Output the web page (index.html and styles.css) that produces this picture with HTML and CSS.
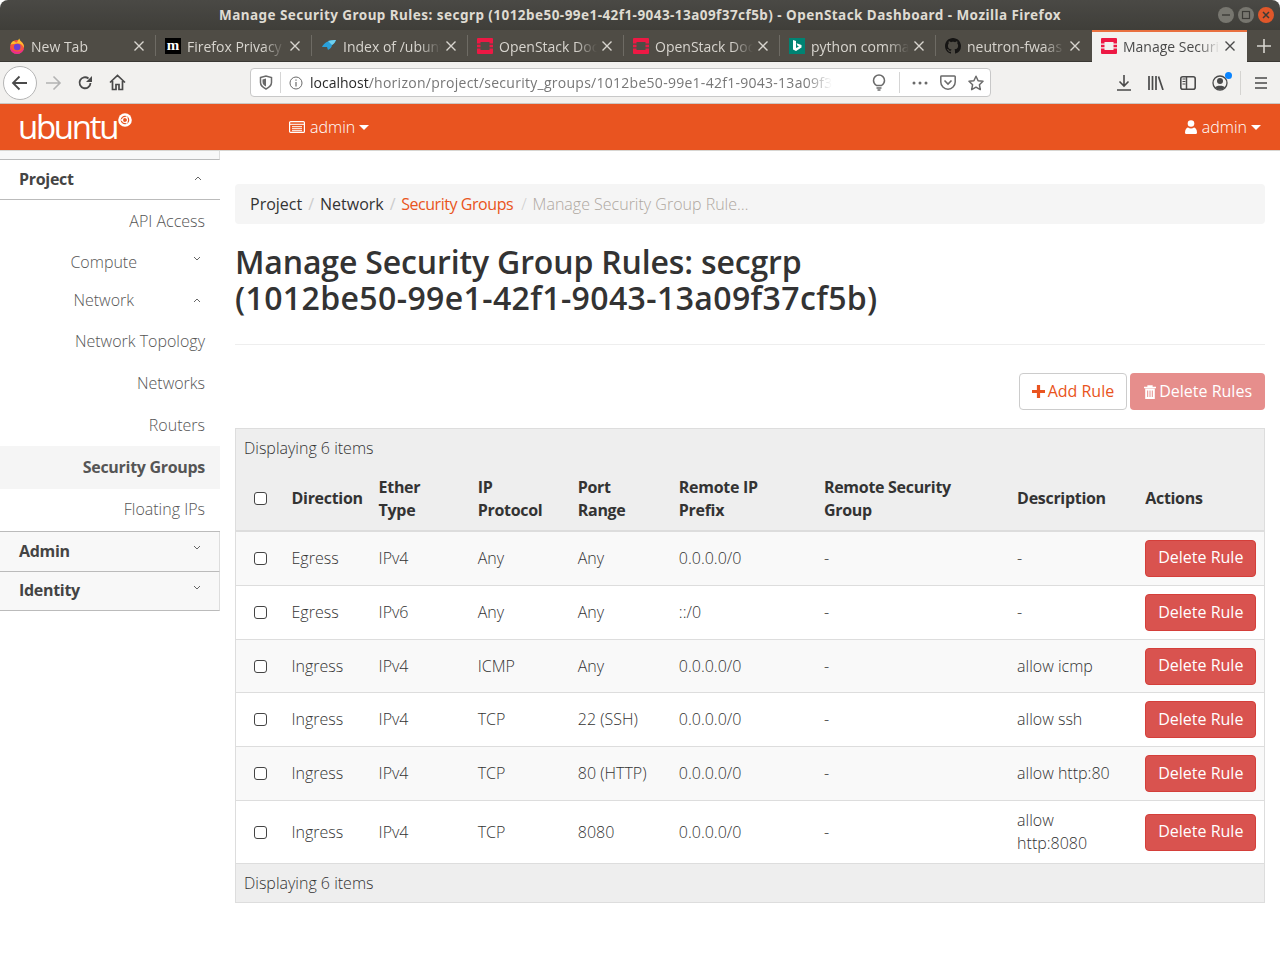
FILE: index.html
```html
<!DOCTYPE html>
<html lang="en">
<head>
    <meta charset="UTF-8">
    <title>Manage Security Group Rules: secgrp - OpenStack Dashboard</title>
    <link rel="stylesheet" href="styles.css">
</head>
<body>
    <svg class="svg-defs" width="0" height="0">
        <symbol id="openstack" viewBox="0 0 16 16">
            <path fill="#ed1944" d="M1 0h14a1 1 0 0 1 1 1v4.500h-3.500V4h-9v1.500H0V1a1 1 0 0 1 1-1zM0 6.700h3.500v2.600H0zM12.500 6.700H16v2.600h-3.500zM0 10.500h3.500V12h9v-1.500H16V15a1 1 0 0 1-1 1H1a1 1 0 0 1-1-1z"/>
        </symbol>
        <symbol id="tabx" viewBox="0 0 10 10">
            <path d="M.5.5l9 9M9.500.5l-9 9" fill="none" stroke="currentColor" stroke-width="1.400"/>
        </symbol>
    </svg>

    <div class="titlebar">
        <span class="window-title">Manage Security Group Rules: secgrp (1012be50-99e1-42f1-9043-13a09f37cf5b) - OpenStack Dashboard - Mozilla Firefox</span>
        <div class="window-buttons">
            <span class="win-btn"><svg width="10" height="10" viewBox="0 0 10 10"><path d="M1 5h8" stroke="#3c3b37" stroke-width="1.400"/></svg></span>
            <span class="win-btn"><svg width="10" height="10" viewBox="0 0 10 10"><rect x="1.500" y="1.500" width="7" height="7" fill="none" stroke="#3c3b37" stroke-width="1.200"/></svg></span>
            <span class="win-btn win-close"><svg width="10" height="10" viewBox="0 0 10 10"><path d="M2 2l6 6M8 2l-6 6" stroke="#3c3b37" stroke-width="1.500"/></svg></span>
        </div>
    </div>

    <div class="tabstrip">
        <div class="tab">
            <svg class="favicon" viewBox="0 0 16 16"><circle cx="8" cy="9" r="7" fill="#f8573c"/><path d="M1.500 6.500C2.500 4 4 3 5 3c1 1 2 1.500 3 1.500C8.500 3 9.500 1.500 10.500.5c0 1.500 1 2.500 2.500 4 1.500 1.500 2.200 3.500 2 5.500-1-2.500-3-4.500-6-4.500-3 0-5.500 1-7.500 1z" fill="#ffbd2e"/><path d="M1 9c0 4 3.200 7 7 7s7-3 7-6.500c-1 2.500-4 4.500-7 4.200-3 0-5.800-2-7-4.700z" fill="#ea2c8f"/><circle cx="8.200" cy="9" r="3.300" fill="#6d3fd6"/></svg>
            <span class="tab-text">New Tab</span><svg class="tab-x"><use href="#tabx"/></svg>
        </div>
        <div class="tab">
            <span class="favicon fav-m">m</span>
            <span class="tab-text">Firefox Privacy Notice</span><svg class="tab-x"><use href="#tabx"/></svg>
        </div>
        <div class="tab">
            <svg class="favicon" viewBox="0 0 16 16"><path d="M1 9c2-4 6-7 14-7-1 2-2 4-4 5 0 2-2 4-4 5l-1-3c-2 0-4 0-5 0z" fill="#2a9fd8"/><path d="M7 3c3-1 6-1 8-1-1 2-2 4-4 5z" fill="#6fd0ef"/></svg>
            <span class="tab-text">Index of /ubuntu</span><svg class="tab-x"><use href="#tabx"/></svg>
        </div>
        <div class="tab">
            <svg class="favicon" viewBox="0 0 16 16"><use href="#openstack"/></svg>
            <span class="tab-text">OpenStack Docs</span><svg class="tab-x"><use href="#tabx"/></svg>
        </div>
        <div class="tab">
            <svg class="favicon" viewBox="0 0 16 16"><use href="#openstack"/></svg>
            <span class="tab-text">OpenStack Docs</span><svg class="tab-x"><use href="#tabx"/></svg>
        </div>
        <div class="tab">
            <svg class="favicon" viewBox="0 0 16 16"><rect width="16" height="16" fill="#008373"/><path d="M4 2l3 1v7l3-1.500-1.500-.8-1-2.500 5 1.800v2.600L7 13l-3-1.500z" fill="#fff"/></svg>
            <span class="tab-text">python command</span><svg class="tab-x"><use href="#tabx"/></svg>
        </div>
        <div class="tab tab-last">
            <svg class="favicon" viewBox="0 0 16 16"><path fill="#161514" d="M8 0C3.580 0 0 3.580 0 8c0 3.540 2.290 6.530 5.470 7.590.4.070.55-.17.55-.38 0-.19-.01-.82-.01-1.490-2.010.37-2.530-.49-2.690-.94-.09-.23-.48-.94-.82-1.130-.28-.15-.68-.52-.01-.53.63-.01 1.080.58 1.230.82.72 1.210 1.870.87 2.330.66.070-.52.28-.87.51-1.070-1.780-.2-3.640-.89-3.640-3.950 0-.87.31-1.590.82-2.150-.08-.2-.36-1.020.08-2.120 0 0 .67-.21 2.200.82.64-.18 1.320-.27 2-.27s1.360.09 2 .27c1.530-1.040 2.200-.82 2.200-.82.44 1.100.16 1.920.08 2.120.51.56.82 1.270.82 2.150 0 3.070-1.870 3.750-3.650 3.950.29.25.54.73.54 1.480 0 1.070-.01 1.930-.01 2.200 0 .21.15.46.55.38A8 8 0 0 0 16 8c0-4.420-3.580-8-8-8z"/></svg>
            <span class="tab-text">neutron-fwaas</span><svg class="tab-x"><use href="#tabx"/></svg>
        </div>
        <div class="tab tab-active">
            <svg class="favicon" viewBox="0 0 16 16"><use href="#openstack"/></svg>
            <span class="tab-text">Manage Security</span><svg class="tab-x"><use href="#tabx"/></svg>
        </div>
        <svg class="new-tab" width="14" height="14" viewBox="0 0 14 14"><path d="M7 0v14M0 7h14" stroke="#d8d5cf" stroke-width="1.600"/></svg>
    </div>

    <div class="toolbar">
        <span class="back-btn">
            <svg width="18" height="18" viewBox="0 0 18 18"><path d="M16 9H2M8.500 2.500L2 9l6.500 6.500" fill="none" stroke="#4a4a4a" stroke-width="1.800"/></svg>
        </span>
        <svg class="tool-icon fwd" width="18" height="18" viewBox="0 0 18 18"><path d="M2 9h14M9.500 2.500L16 9l-6.500 6.500" fill="none" stroke="#b3b3b3" stroke-width="1.600"/></svg>
        <svg class="tool-icon reload" width="16" height="16" viewBox="0 0 16 16"><path d="M13.500 8A5.500 5.500 0 1 1 11.500 3.500" fill="none" stroke="#4a4a4a" stroke-width="1.800"/><path d="M15 1v6H9z" fill="#4a4a4a"/></svg>
        <svg class="tool-icon home" width="17" height="17" viewBox="0 0 17 17"><path d="M1 8.500L8.500 1.500 16 8.500M3.500 7v8.500h3.500v-5h3v5h3.500V7" fill="none" stroke="#4a4a4a" stroke-width="1.700"/></svg>

        <div class="urlbar">
            <svg class="url-shield" width="14" height="15" viewBox="0 0 14 15"><path d="M1.500 2.500L7 1l5.500 1.500v5c0 3-2.500 5-5.500 6.500-3-1.500-5.500-3.500-5.500-6.500z" fill="none" stroke="#6a6a6a" stroke-width="1.500"/><path d="M7 3.500v8c-2-1-3.500-2.500-3.500-4.500V4.500z" fill="#6a6a6a"/></svg>
            <span class="url-sep"></span>
            <svg class="url-info" width="14" height="14" viewBox="0 0 14 14"><circle cx="7" cy="7" r="6" fill="none" stroke="#6a6a6a" stroke-width="1"/><path d="M7 6v4.500M7 3.500v1.300" stroke="#6a6a6a" stroke-width="1.200"/></svg>
            <span class="url-text"><span class="url-host">localhost</span>/horizon/project/security_groups/1012be50-99e1-42f1-9043-13a09f37cf5b/</span>
            <svg class="url-bulb" width="14" height="17" viewBox="0 0 14 17"><path d="M4.500 11.500C3 10.500 1.500 9 1.500 6.500a5.500 5.500 0 0 1 11 0c0 2.500-1.500 4-3 5z" fill="none" stroke="#6a6a6a" stroke-width="1.500"/><path d="M4.500 14h5M5.500 16h3" stroke="#6a6a6a" stroke-width="1.300"/></svg>
            <span class="url-sep url-sep-right"></span>
            <svg class="url-dots" width="16" height="4" viewBox="0 0 16 4"><circle cx="2" cy="2" r="1.500" fill="#6a6a6a"/><circle cx="8" cy="2" r="1.500" fill="#6a6a6a"/><circle cx="14" cy="2" r="1.500" fill="#6a6a6a"/></svg>
            <svg class="url-pocket" width="16" height="15" viewBox="0 0 16 15"><path d="M1.500 1h13a.7.7 0 0 1 .7.700V7a7.200 7.200 0 0 1-14.400 0V1.700A.7.7 0 0 1 1.500 1z" fill="none" stroke="#6a6a6a" stroke-width="1.500"/><path d="M4.500 5.500L8 9l3.500-3.500" fill="none" stroke="#6a6a6a" stroke-width="1.600"/></svg>
            <svg class="url-star" width="16" height="16" viewBox="0 0 16 16"><path d="M8 1.200l2.100 4.500 4.900.6-3.600 3.400.9 4.900L8 12.200l-4.300 2.400.9-4.900L1 6.300l4.900-.6z" fill="none" stroke="#6a6a6a" stroke-width="1.500" stroke-linejoin="round"/></svg>
        </div>

        <div class="tool-right">
            <svg width="14" height="16" viewBox="0 0 14 16"><path d="M7 0v11M2.500 6.500L7 11l4.500-4.500M0 15h14" fill="none" stroke="#4a4a4a" stroke-width="1.600"/></svg>
            <svg class="tr-lib" width="16" height="14" viewBox="0 0 16 14"><path d="M1 0v14M4.500 0v14M8 0v14M10.500.5l4.500 13.500" fill="none" stroke="#4a4a4a" stroke-width="1.700"/></svg>
            <svg class="tr-side" width="16" height="14" viewBox="0 0 16 14"><rect x=".8" y=".8" width="14.400" height="12.400" rx="2" fill="none" stroke="#4a4a4a" stroke-width="1.600"/><path d="M6.500 1v12" stroke="#4a4a4a" stroke-width="1.500"/><path d="M2.500 3h3M2.500 5.500h3M2.500 8h3" stroke="#4a4a4a"/></svg>
            <span class="tr-account">
                <svg width="16" height="16" viewBox="0 0 16 16"><circle cx="8" cy="8" r="7" fill="none" stroke="#4a4a4a" stroke-width="1.300"/><circle cx="8" cy="6" r="3" fill="#4a4a4a"/><path d="M3 12.500c1-2.500 9-2.500 10 0-2 2.500-8 2.500-10 0z" fill="#4a4a4a"/></svg>
                <span class="account-dot"></span>
            </span>
            <span class="tr-sep"></span>
            <svg class="tr-menu" width="12" height="12" viewBox="0 0 12 12"><path d="M0 1h12M0 6h12M0 11h12" stroke="#4a4a4a" stroke-width="1.500"/></svg>
        </div>
    </div>

    <nav class="navbar">
        <a class="brand">ubuntu<svg class="brand-mark" width="14" height="14" viewBox="0 0 14 14"><circle cx="7" cy="7" r="6.800" fill="#fff"/><circle cx="7" cy="7" r="4.300" fill="#e95420"/><circle cx="7" cy="7" r="2.500" fill="none" stroke="#fff" stroke-width="1.100"/><circle cx="4" cy="7" r="1.100" fill="#fff"/><circle cx="8.500" cy="4.400" r="1.100" fill="#fff"/><circle cx="8.500" cy="9.600" r="1.100" fill="#fff"/></svg></a>
        <div class="project-menu">
            <svg width="16" height="12" viewBox="0 0 16 12"><rect x=".6" y=".6" width="14.800" height="10.800" rx="1" fill="none" stroke="#fff" stroke-width="1.200"/><path d="M1 3.300h14M3 5.700h10M3 7.700h10M3 9.700h10" stroke="#fff"/></svg>
            <span>admin</span><span class="caret"></span>
        </div>
        <div class="user-menu">
            <svg width="12" height="14" viewBox="0 0 12 14"><circle cx="6" cy="3.500" r="3.300" fill="#fff"/><path d="M0 12.500C0 9 2 7.500 3 7.500c1.800 1.200 4.200 1.200 6 0 1 0 3 1.500 3 5 0 1-.8 1.500-1.500 1.500h-9C.8 14 0 13.500 0 12.500z" fill="#fff"/></svg>
            <span>admin</span><span class="caret"></span>
        </div>
    </nav>

    <div class="page">
        <aside class="sidebar">
            <div class="side-top"></div>
            <div class="side-head side-open">Project<svg class="chev" width="8" height="5" viewBox="0 0 8 5"><path d="M1 4l3-3 3 3" fill="none" stroke="#666" stroke-width="1"/></svg></div>
            <ul class="side-list">
                <li class="side-item">API Access</li>
                <li class="side-group group-compute">Compute<svg class="chev" width="8" height="5" viewBox="0 0 8 5"><path d="M1 1l3 3 3-3" fill="none" stroke="#666" stroke-width="1"/></svg></li>
                <li class="side-group group-network">Network<svg class="chev" width="8" height="5" viewBox="0 0 8 5"><path d="M1 4l3-3 3 3" fill="none" stroke="#666" stroke-width="1"/></svg></li>
                <li class="side-item">Network Topology</li>
                <li class="side-item">Networks</li>
                <li class="side-item">Routers</li>
                <li class="side-item side-active">Security Groups</li>
                <li class="side-item side-last">Floating IPs</li>
            </ul>
            <div class="side-head side-closed side-admin">Admin<svg class="chev" width="8" height="5" viewBox="0 0 8 5"><path d="M1 1l3 3 3-3" fill="none" stroke="#666" stroke-width="1"/></svg></div>
            <div class="side-head side-closed">Identity<svg class="chev" width="8" height="5" viewBox="0 0 8 5"><path d="M1 1l3 3 3-3" fill="none" stroke="#666" stroke-width="1"/></svg></div>
        </aside>

        <main class="content">
            <ol class="breadcrumb">
                <li>Project</li>
                <li>Network</li>
                <li class="crumb-link">Security Groups</li>
                <li class="crumb-current">Manage Security Group Rule…</li>
            </ol>

            <h1 class="page-title">Manage Security Group Rules: secgrp <span class="title-id">(1012be50-99e1-42f1-9043-13a09f37cf5b)</span></h1>

            <div class="actions">
                <button class="btn btn-add"><svg width="13" height="13" viewBox="0 0 13 13"><path d="M6.500 0v13M0 6.500h13" stroke="#e95420" stroke-width="3.200"/></svg>Add Rule</button>
                <button class="btn btn-delete-all"><svg width="12" height="14" viewBox="0 0 12 14"><path d="M0 2.500h12M4 2.500V1h4v1.500" fill="none" stroke="#fff" stroke-width="1.300"/><path d="M1.200 3.500h9.600V14H1.200z" fill="#fff"/><path d="M3.700 5.500v6.500M6 5.500v6.500M8.300 5.500v6.500" stroke="#e68e8c" stroke-width="1"/></svg>Delete Rules</button>
            </div>

            <table class="rules">
                <colgroup>
                    <col class="col-check"><col class="col-dir"><col class="col-ether"><col class="col-proto"><col class="col-port"><col class="col-prefix"><col class="col-group"><col class="col-desc"><col class="col-act">
                </colgroup>
                <thead>
                    <tr class="meta-row"><td colspan="9">Displaying 6 items</td></tr>
                    <tr class="head-row">
                        <th class="cell-check"><input type="checkbox"></th>
                        <th>Direction</th>
                        <th>Ether<br>Type</th>
                        <th>IP<br>Protocol</th>
                        <th>Port<br>Range</th>
                        <th>Remote IP<br>Prefix</th>
                        <th>Remote Security<br>Group</th>
                        <th>Description</th>
                        <th>Actions</th>
                    </tr>
                </thead>
                <tbody>
                    <tr><td class="cell-check"><input type="checkbox"></td><td>Egress</td><td>IPv4</td><td>Any</td><td>Any</td><td>0.0.0.0/0</td><td>-</td><td>-</td><td><button class="btn btn-delete">Delete Rule</button></td></tr>
                    <tr><td class="cell-check"><input type="checkbox"></td><td>Egress</td><td>IPv6</td><td>Any</td><td>Any</td><td>::/0</td><td>-</td><td>-</td><td><button class="btn btn-delete">Delete Rule</button></td></tr>
                    <tr><td class="cell-check"><input type="checkbox"></td><td>Ingress</td><td>IPv4</td><td>ICMP</td><td>Any</td><td>0.0.0.0/0</td><td>-</td><td>allow icmp</td><td><button class="btn btn-delete">Delete Rule</button></td></tr>
                    <tr><td class="cell-check"><input type="checkbox"></td><td>Ingress</td><td>IPv4</td><td>TCP</td><td>22 (SSH)</td><td>0.0.0.0/0</td><td>-</td><td>allow ssh</td><td><button class="btn btn-delete">Delete Rule</button></td></tr>
                    <tr><td class="cell-check"><input type="checkbox"></td><td>Ingress</td><td>IPv4</td><td>TCP</td><td>80 (HTTP)</td><td>0.0.0.0/0</td><td>-</td><td>allow http:80</td><td><button class="btn btn-delete">Delete Rule</button></td></tr>
                    <tr><td class="cell-check"><input type="checkbox"></td><td>Ingress</td><td>IPv4</td><td>TCP</td><td>8080</td><td>0.0.0.0/0</td><td>-</td><td>allow<br>http:8080</td><td><button class="btn btn-delete">Delete Rule</button></td></tr>
                </tbody>
                <tfoot>
                    <tr class="meta-row"><td colspan="9">Displaying 6 items</td></tr>
                </tfoot>
            </table>
        </main>
    </div>
</body>
</html>
```

FILE: styles.css
```css
* {
    margin: 0;
    padding: 0;
    box-sizing: border-box;
}

body {
    width: 1280px;
    height: 977px;
    overflow: hidden;
    background: #fff;
    color: #333;
    font-family: 'Open Sans', 'Noto Sans', sans-serif;
    font-size: 15px;
    font-weight: 300;
}

.svg-defs {
    position: absolute;
}

/* window title */
.titlebar {
    height: 30px;
    display: flex;
    align-items: center;
    justify-content: center;
    position: relative;
    background: linear-gradient(#4a4945, #3f3e39);
    border-radius: 8px 8px 0 0;
}

.window-title {
    color: #dfdbd2;
    font-family: 'Noto Sans', sans-serif;
    font-size: 13.500px;
    font-weight: 700;
    letter-spacing: 0.450px;
    white-space: nowrap;
}

.window-buttons {
    position: absolute;
    top: 7px;
    right: 6px;
    display: flex;
    gap: 4px;
}

.win-btn {
    width: 16px;
    height: 16px;
    border-radius: 50%;
    background: #77766f;
    display: flex;
    align-items: center;
    justify-content: center;
}

.win-close {
    background: #e0572a;
}

/* tabs */
.tabstrip {
    height: 32px;
    display: flex;
    align-items: stretch;
    background: #4f4c45;
    border-bottom: 1px solid #3a3833;
}

.tab {
    width: 156px;
    display: flex;
    align-items: center;
    padding: 0 12px 0 9px;
    color: #d8d5cf;
    font-size: 14px;
    font-weight: 400;
    position: relative;
}

.tab::after {
    content: "";
    position: absolute;
    right: 0;
    top: 5px;
    bottom: 5px;
    width: 1px;
    background: #6e6b64;
}

.tab-last::after,
.tab-active::after {
    display: none;
}

.favicon {
    width: 16px;
    height: 16px;
    flex: none;
    margin-right: 6px;
}

.fav-m {
    background: #000;
    color: #fff;
    font-family: 'Liberation Serif', serif;
    font-size: 15px;
    font-weight: 700;
    line-height: 14px;
    text-align: center;
}

.tab-text {
    flex: 1;
    padding-top: 1px;
    overflow: hidden;
    white-space: nowrap;
    -webkit-mask-image: linear-gradient(to right, #000 78%, transparent 100%);
    mask-image: linear-gradient(to right, #000 78%, transparent 100%);
}

.tab-x {
    width: 10px;
    height: 10px;
    margin-left: 5px;
    flex: none;
}

.tab-active {
    width: 155px;
    background: #f2f1ef;
    color: #4a4a4a;
    box-shadow: inset 0 2px 0 #e9703f;
    margin-bottom: -1px;
}

.new-tab {
    margin: 9px 0 0 10px;
}

/* browser toolbar */
.toolbar {
    height: 42px;
    display: flex;
    align-items: center;
    background: #f2f1ef;
    border-bottom: 1px solid #c9c8c5;
    padding-left: 3px;
}

.back-btn {
    width: 34px;
    height: 34px;
    border: 1px solid #b5b5b5;
    border-radius: 50%;
    background: #fff;
    display: flex;
    align-items: center;
    justify-content: center;
    flex: none;
}

.fwd {
    margin-left: 7px;
}

.reload {
    margin-left: 15px;
}

.home {
    margin-left: 16px;
}

.urlbar {
    width: 741px;
    height: 29px;
    margin-left: 124px;
    display: flex;
    align-items: center;
    flex: none;
    background: #fff;
    border: 1px solid #c8c8c8;
    border-radius: 4px;
    padding-left: 8px;
}

.url-shield {
    flex: none;
}

.url-sep {
    width: 1px;
    height: 21px;
    margin-left: 7px;
    background: #d5d5d5;
    flex: none;
}

.url-info {
    margin-left: 8px;
    flex: none;
}

.url-text {
    width: 522px;
    margin-left: 7px;
    overflow: hidden;
    white-space: nowrap;
    color: #777;
    font-size: 14px;
    font-weight: 400;
    letter-spacing: 0.270px;
    flex: none;
    -webkit-mask-image: linear-gradient(to right, #000 95%, transparent 100%);
    mask-image: linear-gradient(to right, #000 95%, transparent 100%);
}

.url-host {
    color: #2a2a2a;
    letter-spacing: 0;
}

.url-bulb {
    margin-left: 40px;
    flex: none;
}

.url-sep-right {
    margin-left: 13px;
}

.url-dots {
    margin-left: 12px;
    flex: none;
}

.url-pocket {
    margin-left: 12px;
    flex: none;
}

.url-star {
    margin-left: 12px;
    flex: none;
}

.tool-right {
    display: flex;
    align-items: center;
    margin-left: 126px;
}

.tr-lib {
    margin-left: 17px;
}

.tr-side {
    margin-left: 16px;
}

.tr-account {
    position: relative;
    display: flex;
    margin-left: 16px;
}

.account-dot {
    position: absolute;
    top: -3px;
    right: -4px;
    width: 7px;
    height: 7px;
    border-radius: 50%;
    background: #0a84ff;
}

.tr-sep {
    width: 1px;
    height: 24px;
    margin-left: 12px;
    background: #d5d4d1;
}

.tr-menu {
    margin-left: 14px;
}

/* ubuntu navbar */
.navbar {
    height: 47px;
    display: flex;
    align-items: center;
    background: #e95420;
    border-bottom: 1px solid #d8d6d2;
    color: #fff;
    font-size: 16px;
    padding-left: 18px;
}

.brand {
    width: 271px;
    display: flex;
    align-items: flex-start;
    font-size: 33px;
    line-height: 44px;
    font-weight: 400;
    letter-spacing: -2.300px;
}

.brand-mark {
    margin: 8px 0 0 1px;
}

.project-menu,
.user-menu {
    display: flex;
    align-items: center;
    gap: 5px;
}

.user-menu {
    margin-left: auto;
    margin-right: 19px;
}

.caret {
    width: 0;
    height: 0;
    border-top: 5px solid #fff;
    border-left: 5px solid transparent;
    border-right: 5px solid transparent;
    margin-left: -1px;
}

/* page */
.page {
    display: flex;
    align-items: flex-start;
}

.sidebar {
    width: 220px;
    flex: none;
}

.side-top {
    height: 9px;
    background: #f8f8f8;
    border-right: 1px solid #ddd;
    border-bottom: 1px solid #bbb;
}

.side-head {
    height: 39px;
    display: flex;
    align-items: center;
    justify-content: space-between;
    padding: 0 19px;
    font-weight: 700;
    font-size: 16px;
    letter-spacing: -0.300px;
    color: #444;
    border-bottom: 1px solid #bbb;
}

.side-open,
.side-admin {
    height: 40px;
}

.side-open,
.side-closed {
    padding-bottom: 2px;
}

.side-closed {
    background: #f8f8f8;
    border-right: 1px solid #ddd;
}

.side-closed .chev {
    margin-top: -6px;
}

.side-head .chev {
    margin-right: -1px;
}

.side-list {
    list-style: none;
    height: 332px;
    border-bottom: 1px solid #bbb;
}

.side-item {
    height: 42px;
    line-height: 42px;
    padding-right: 15px;
    text-align: right;
    color: #555;
    font-size: 16px;
}

.side-group {
    display: flex;
    align-items: center;
    justify-content: flex-end;
    color: #555;
    font-size: 16px;
    padding-right: 19px;
}

.group-compute {
    height: 40px;
}

.group-compute .chev {
    margin: -8px 0 0 56px;
}

.group-network {
    height: 38px;
    padding-bottom: 2px;
}

.group-network .chev {
    margin-left: 59px;
}

.side-active {
    height: 43px;
    background: #f5f5f5;
    font-weight: 700;
    letter-spacing: -0.300px;
}

.side-last {
    line-height: 40px;
}

.content {
    flex: 1;
    min-width: 0;
    padding: 33px 15px 0;
}

.breadcrumb {
    height: 40px;
    display: flex;
    align-items: center;
    list-style: none;
    padding: 0 15px;
    background: #f5f5f5;
    border-radius: 4px;
    font-size: 16px;
    font-weight: 400;
}

.breadcrumb li + li::before {
    content: "/";
    padding: 0 6px;
    color: #ccc;
}

.crumb-link {
    color: #e95420;
    letter-spacing: -0.450px;
}

.crumb-current {
    margin-left: 2px;
    color: #aea79f;
    font-weight: 300;
}

.page-title {
    padding-top: 20px;
    padding-bottom: 28px;
    font-size: 32px;
    font-weight: 600;
    line-height: 36px;
    letter-spacing: -0.150px;
    color: #333;
}

.title-id {
    display: block;
    letter-spacing: 0.380px;
}

.actions {
    display: flex;
    justify-content: flex-end;
    gap: 3px;
    border-top: 1px solid #eee;
    padding-top: 28px;
}

.btn {
    height: 37px;
    padding: 0 12px 2px;
    border-radius: 4px;
    font-family: inherit;
    font-size: 16px;
    font-weight: 400;
    display: flex;
    align-items: center;
    border: 1px solid transparent;
    white-space: nowrap;
}

.btn svg {
    margin: 2px 3px 0 0;
}

.btn-add {
    background: #fff;
    border-color: #ccc;
    color: #e95420;
}

.btn-delete-all {
    background: #e68e8c;
    color: #fff;
    padding-left: 13px;
}

.btn-delete {
    background: #d9534f;
    border-color: #d43f3a;
    color: #fff;
}

/* rules table */
.rules {
    width: 1030px;
    margin-top: 18px;
    border-collapse: collapse;
    table-layout: fixed;
    border: 1px solid #ddd;
    font-size: 16px;
}

.rules td,
.rules th {
    padding: 7px 8px;
    text-align: left;
    vertical-align: middle;
    line-height: 23px;
}

.meta-row td {
    background: #eee;
    height: 39px;
}

tfoot .meta-row td {
    border-top: 1px solid #ddd;
}

.head-row th {
    background: #eee;
    height: 63px;
    border-bottom: 2px solid #ddd;
    font-weight: 700;
    letter-spacing: -0.300px;
}

.rules tbody tr {
    height: 54px;
    border-top: 1px solid #ddd;
}

.rules tbody tr:first-child {
    height: 55px;
    border-top: 0;
}

.rules tbody tr:nth-child(3) {
    height: 53px;
}

.rules tbody tr:nth-child(odd) {
    background: #f9f9f9;
}

.rules tbody tr:last-child {
    height: 63px;
    background: #fff;
}

.col-check { width: 48px; }
.col-dir { width: 87px; }
.col-ether { width: 99px; }
.col-proto { width: 100px; }
.col-port { width: 101px; }
.col-prefix { width: 145px; }
.col-group { width: 193px; }
.col-desc { width: 128px; }
.col-act { width: 127px; }

.rules .cell-check {
    padding-left: 18px;
}

input[type="checkbox"] {
    appearance: none;
    -webkit-appearance: none;
    display: block;
    width: 13px;
    height: 13px;
    border: 1.500px solid #444;
    border-radius: 3px;
    background: #fff;
}
```
